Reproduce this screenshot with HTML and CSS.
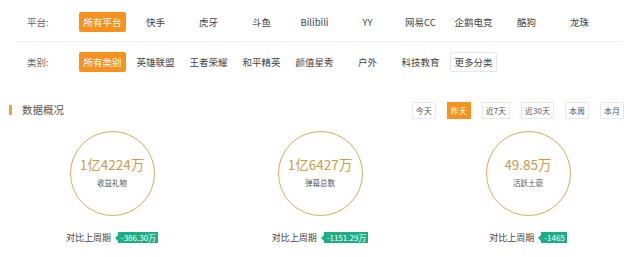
FILE: index.html
```html
<!DOCTYPE html>
<html lang="zh-CN">
<head>
    <meta charset="UTF-8">
    <meta name="viewport" content="width=device-width, initial-scale=1.0">
    <title>数据概况</title>
    <link rel="stylesheet" href="styles.css">
</head>
<body>

    <div class="filters">
        <div class="filter-row">
            <span class="filter-label">平台:</span>
            <a class="filter-item active">所有平台</a>
            <a class="filter-item">快手</a>
            <a class="filter-item">虎牙</a>
            <a class="filter-item">斗鱼</a>
            <a class="filter-item">Bilibili</a>
            <a class="filter-item">YY</a>
            <a class="filter-item">网易CC</a>
            <a class="filter-item">企鹅电竞</a>
            <a class="filter-item">酷狗</a>
            <a class="filter-item">龙珠</a>
        </div>
        <div class="filter-row">
            <span class="filter-label">类别:</span>
            <a class="filter-item active">所有类别</a>
            <a class="filter-item">英雄联盟</a>
            <a class="filter-item">王者荣耀</a>
            <a class="filter-item">和平精英</a>
            <a class="filter-item">颜值星秀</a>
            <a class="filter-item">户外</a>
            <a class="filter-item">科技教育</a>
            <a class="filter-item more">更多分类</a>
        </div>
    </div>

    <div class="overview">
        <div class="overview-head">
            <h3 class="title">数据概况</h3>
            <div class="ranges">
                <a class="range">今天</a>
                <a class="range active">昨天</a>
                <a class="range">近7天</a>
                <a class="range">近30天</a>
                <a class="range">本周</a>
                <a class="range">本月</a>
            </div>
        </div>

        <div class="stats">
            <div class="stat">
                <div class="circle">
                    <span class="value">1亿4224万</span>
                    <span class="name">收益礼物</span>
                </div>
                <div class="compare">对比上周期 <span class="badge">-386.30万</span></div>
            </div>
            <div class="stat">
                <div class="circle">
                    <span class="value">1亿6427万</span>
                    <span class="name">弹幕总数</span>
                </div>
                <div class="compare">对比上周期 <span class="badge">-1151.29万</span></div>
            </div>
            <div class="stat">
                <div class="circle">
                    <span class="value">49.85万</span>
                    <span class="name">活跃土豪</span>
                </div>
                <div class="compare">对比上周期 <span class="badge">-1465</span></div>
            </div>
        </div>
    </div>

</body>
</html>
```

FILE: styles.css
```css
body {
    margin: 0;
    background-color: #fff;
    font-family: "Noto Sans CJK SC", "Noto Sans", sans-serif;
    color: #333;
}
a {
    cursor: pointer;
}

/* filters */
.filters {
    margin: 0 17px 0 15px;
    padding-top: 2px;
}
.filter-row {
    display: flex;
    align-items: center;
    height: 39px;
    padding-left: 12px;
}
.filter-row + .filter-row {
    border-top: 1px solid #f0f0f0;
}
.filter-label {
    width: 52px;
    font-size: 9.5px;
    color: #666;
}
.filter-item {
    width: 47px;
    height: 20px;
    line-height: 20px;
    margin-right: 6px;
    text-align: center;
    font-size: 9.5px;
    color: #444;
    border-radius: 2px;
    box-sizing: border-box;
}
.filter-item.active {
    background-color: #f5931e;
    color: #fff;
}
.filter-item.more {
    border: 1px solid #e6e6e6;
    line-height: 18px;
}

/* overview */
.overview {
    padding: 19px 16px 0 9px;
}
.overview-head {
    display: flex;
    align-items: center;
    justify-content: space-between;
    height: 20px;
}
.title {
    margin: 0;
    padding-left: 10px;
    border-left: 3px solid #e9a24a;
    font-size: 10.5px;
    font-weight: normal;
    line-height: 10px;
    color: #555;
}
.ranges {
    display: flex;
    gap: 11px;
}
.range {
    height: 17px;
    line-height: 15px;
    padding: 0 3px;
    border: 1px solid #e8e8e8;
    font-size: 8px;
    color: #555;
    box-sizing: border-box;
}
.range.active {
    background-color: #f5931e;
    border-color: #f5931e;
    color: #fff;
}

.stats {
    display: grid;
    grid-template-columns: repeat(3, 1fr);
    margin: 11px -8px 0 -1px;
}
.stat {
    display: flex;
    flex-direction: column;
    align-items: center;
}
.circle {
    width: 85px;
    height: 85px;
    border: 1.5px solid #d9aa58;
    border-radius: 50%;
    box-sizing: border-box;
    display: flex;
    flex-direction: column;
    align-items: center;
    justify-content: center;
}
.value {
    font-size: 13.5px;
    color: #cf9a4c;
    line-height: 16px;
    margin-top: -4px;
}
.name {
    font-size: 7.5px;
    color: #555;
    margin-top: 5px;
}
.compare {
    display: flex;
    align-items: center;
    margin-top: 15px;
    font-size: 9px;
    color: #444;
}
.badge {
    position: relative;
    margin-left: 7px;
    height: 11px;
    line-height: 11px;
    padding: 0 2px 0 3px;
    background-color: #1eae84;
    color: #fff;
    font-size: 8px;
}
.badge::before {
    content: "";
    position: absolute;
    left: -3px;
    top: 2.5px;
    border-top: 3px solid transparent;
    border-bottom: 3px solid transparent;
    border-right: 3px solid #1eae84;
}
```
